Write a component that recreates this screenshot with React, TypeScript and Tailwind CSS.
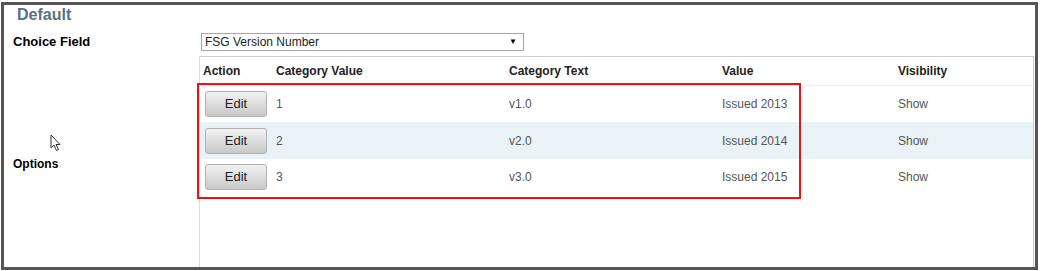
import * as React from "react";

const rows = [
  { id: 1, value: "1", text: "v1.0", val: "Issued 2013", vis: "Show" },
  { id: 2, value: "2", text: "v2.0", val: "Issued 2014", vis: "Show" },
  { id: 3, value: "3", text: "v3.0", val: "Issued 2015", vis: "Show" },
];

const cols = "grid grid-cols-[72px_233px_213px_176px_1fr]";

export default function App() {
  return (
    <div className="relative w-[1042px] h-[271px] bg-white overflow-hidden font-['Liberation_Sans',Arial,sans-serif]">
      <div className="absolute left-[1px] top-[2px] w-[1037px] h-[268px] border-[3px] border-[#555] flex flex-col">
        <h2 className="h-[24px] pl-[13px] pt-[1px] text-[16px] leading-[18px] font-bold text-[#56708a]">
          Default
        </h2>

        <div className="flex items-center h-[25px]">
          <div className="w-[195px] pl-[9px] text-[13px] font-bold text-black">
            Choice Field
          </div>
          <div className="ml-[2px] w-[323px] h-[18px] border border-[#a5a5a5] bg-white flex items-center justify-between pl-[3px] pr-[6px] text-[12px] text-[#222]">
            <span>FSG Version Number</span>
            <span className="text-[8px] text-black">▼</span>
          </div>
        </div>

        <div className="flex flex-1">
          <div className="w-[195px] pl-[9px] flex items-center">
            <span className="text-[12px] font-bold text-black mt-[6px]">Options</span>
          </div>

          <div className="relative w-[835px] mt-[2px] border-t border-x border-[#cfcfcf] border-l-[#dcdcdc]">
            <div className={`${cols} h-[29px] items-center border-b border-[#eeeeee] text-[12px] font-bold text-[#222]`}>
              <div className="pl-[3px]">Action</div>
              <div className="pl-[4px]">Category Value</div>
              <div className="pl-[4px]">Category Text</div>
              <div className="pl-[4px]">Value</div>
              <div className="pl-[4px]">Visibility</div>
            </div>

            {rows.map((r, i) => (
              <div
                key={r.id}
                className={`${cols} ${i === 1 ? "h-[37px] bg-[#e8f2f7]" : "h-[36px]"} items-center text-[12px] text-[#555]`}
              >
                <div className="pl-[5px]">
                  <button className="w-[62px] h-[26px] rounded-[3px] border border-[#b0b0b0] bg-gradient-to-b from-[#f2f2f2] to-[#c9c9c9] text-[13px] text-[#222]">
                    Edit
                  </button>
                </div>
                <div className="pl-[4px]">{r.value}</div>
                <div className="pl-[4px]">{r.text}</div>
                <div className="pl-[4px]">{r.val}</div>
                <div className="pl-[4px]">{r.vis}</div>
              </div>
            ))}

            <div className="absolute left-[-3px] top-[26px] w-[604px] h-[116px] border-2 border-[#ee1111] pointer-events-none" />
          </div>
        </div>
      </div>

      <svg
        className="absolute left-[50px] top-[134px]"
        width="12"
        height="18"
        viewBox="0 0 12 18"
      >
        <path
          d="M1 1 L1 14 L4 11 L6.5 16.5 L8.5 15.5 L6 10.5 L10 10.5 Z"
          fill="#fff"
          stroke="#333"
          strokeWidth="1"
          strokeLinejoin="round"
        />
      </svg>
    </div>
  );
}
